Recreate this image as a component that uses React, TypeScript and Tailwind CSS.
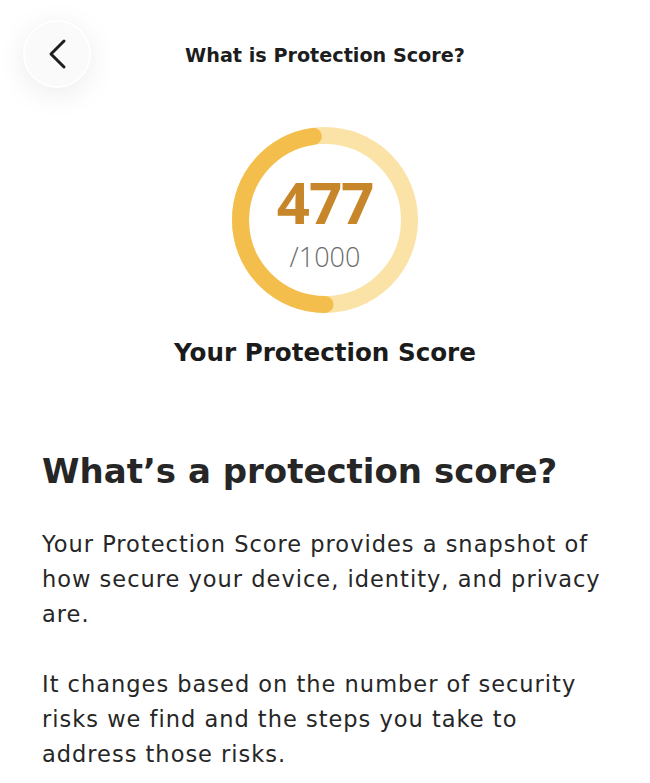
import React from "react";

function ScoreRing({ score, max }: { score: number; max: number }) {
  const size = 186;
  const stroke = 17;
  const r = (size - stroke) / 2;
  const c = 2 * Math.PI * r;
  const frac = score / max;
  return (
    <div className="relative w-[186px] h-[186px]">
      <svg width={size} height={size} viewBox={`0 0 ${size} ${size}`}>
        <circle cx={size / 2} cy={size / 2} r={r} fill="none" stroke="#FBE3A8" strokeWidth={stroke} />
        {/* progress runs clockwise from the bottom, up the left side */}
        <circle
          cx={size / 2}
          cy={size / 2}
          r={r}
          fill="none"
          stroke="#F3BE4C"
          strokeWidth={stroke}
          strokeLinecap="round"
          strokeDasharray={`${c * frac} ${c}`}
          transform={`rotate(90 ${size / 2} ${size / 2})`}
        />
      </svg>
      <div className="absolute inset-0 flex flex-col items-center justify-center pt-[10px]">
        <span className="font-['Open_Sans',sans-serif] font-bold text-[58px] leading-[46px] tracking-[-1px] text-[#C8862A]">
          {score}
        </span>
        <span className="font-['Open_Sans',sans-serif] font-light text-[27px] leading-[28px] text-[#6b6b6b] mt-[18px]">
          /{max}
        </span>
      </div>
    </div>
  );
}

export default function App() {
  return (
    <div className="w-[650px] h-[783px] bg-white overflow-hidden font-['DejaVu_Sans',sans-serif] text-[#1f1f1f]">
      <header className="grid grid-cols-[1fr_auto_1fr] items-center pt-[20px] px-[23px]">
        <button className="w-[68px] h-[68px] rounded-full bg-[#fafafa] border-2 border-white shadow-[0_6px_30px_rgba(0,0,0,0.08)] flex items-center justify-center">
          <svg width="20" height="32" viewBox="0 0 20 32" fill="none" className="ml-[1px]">
            <path d="M16 3 L3 16 L16 29" stroke="#1e1e1e" strokeWidth="3" strokeLinecap="round" strokeLinejoin="round" />
          </svg>
        </button>
        <h1 className="mt-[3px] text-[19.2px] font-semibold leading-[28px] text-[#1d1d1d]">
          What is Protection Score?
        </h1>
        <div />
      </header>

      <section className="flex flex-col items-center mt-[39px]">
        <ScoreRing score={477} max={1000} />
        <p className="mt-[24px] text-[24.6px] font-semibold leading-[32px] text-[#1b1b1b]">
          Your Protection Score
        </p>
      </section>

      <section className="pl-[42px] pr-[42px] mt-[80px]">
        <h2 className="text-[34px] font-bold leading-[44px] text-[#262626]">
          What’s a protection score?
        </h2>
        <p className="mt-[34px] text-[22.5px] leading-[35px] tracking-[1px] text-[#262626] font-normal">
          Your Protection Score provides a snapshot of how secure your device, identity, and privacy are.
        </p>
        <p className="mt-[35px] text-[22.5px] leading-[35px] tracking-[1px] text-[#262626] font-normal">
          It changes based on the number of security risks we find and the steps you take to address those risks.
        </p>
      </section>
    </div>
  );
}
